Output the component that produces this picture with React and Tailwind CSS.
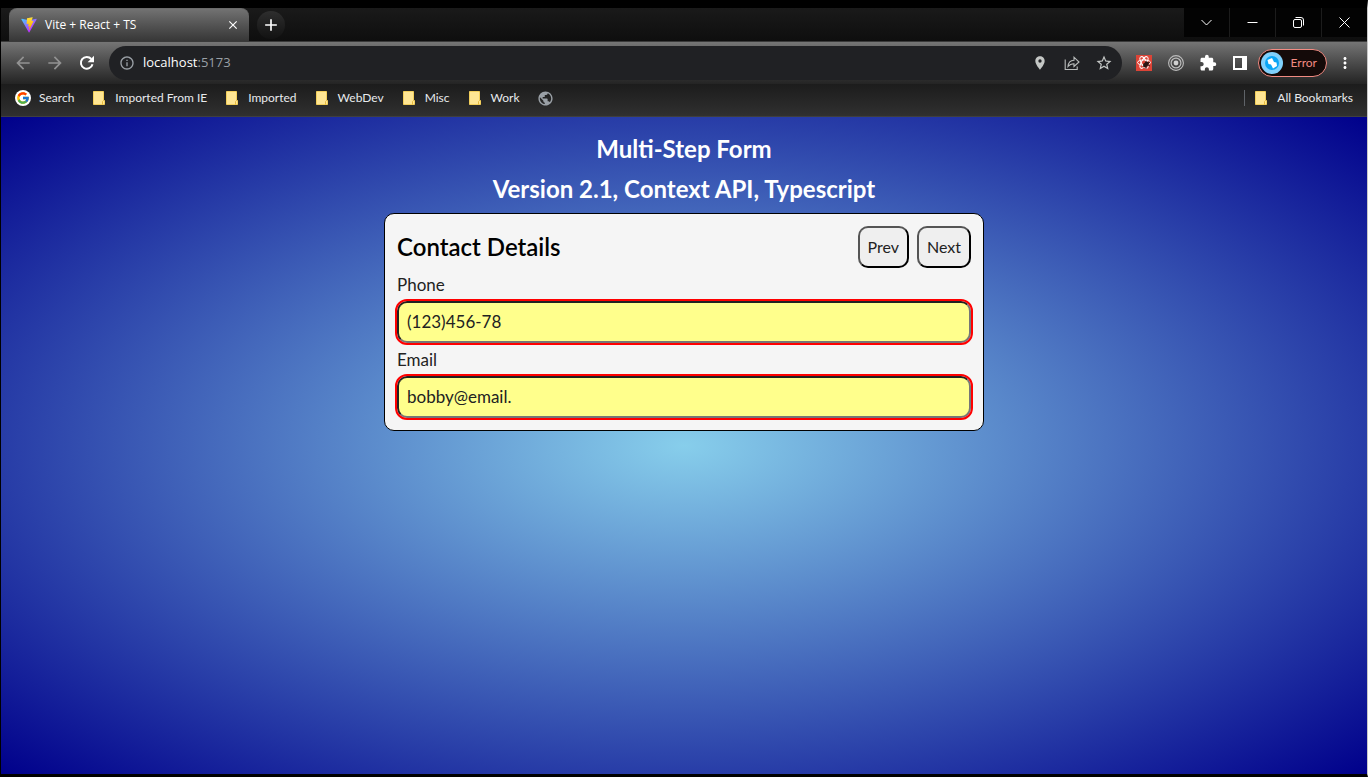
import React, { useState } from "react";
import { MdArrowBack, MdArrowForward, MdInfoOutline, MdLocationOn, MdStarBorder, MdExtension, MdMoreVert, MdClose, MdAdd, MdPublic } from "react-icons/md";
import { FcGoogle } from "react-icons/fc";

const folders = ["Imported From IE", "Imported", "WebDev", "Misc", "Work"];

function ViteLogo() {
  return (
    <svg viewBox="0 0 410 404" className="size-4" aria-hidden="true">
      <defs>
        <linearGradient id="vite-a" x1="6" y1="33" x2="235" y2="344" gradientUnits="userSpaceOnUse">
          <stop stopColor="#41D1FF" />
          <stop offset="1" stopColor="#BD34FE" />
        </linearGradient>
        <linearGradient id="vite-b" x1="194.651" y1="8.818" x2="236.076" y2="292.989" gradientUnits="userSpaceOnUse">
          <stop stopColor="#FFEA83" />
          <stop offset="0.083" stopColor="#FFDD35" />
          <stop offset="1" stopColor="#FFA800" />
        </linearGradient>
      </defs>
      <path d="M399.641 59.525L215.643 388.545C211.844 395.338 202.084 395.378 198.228 388.618L10.582 59.556C6.381 52.19 12.68 43.267 21.028 44.759L205.223 77.682C206.398 77.892 207.601 77.89 208.776 77.676L389.119 44.806C397.439 43.289 403.768 52.143 399.641 59.525Z" fill="url(#vite-a)" />
      <path d="M292.965 1.574L156.801 28.255C154.563 28.694 152.906 30.59 152.771 32.866L144.395 174.33C144.198 177.662 147.258 180.248 150.51 179.498L188.42 170.749C191.967 169.931 195.172 173.055 194.443 176.622L183.18 231.775C182.422 235.487 185.907 238.661 189.532 237.56L212.947 230.446C216.577 229.344 220.065 232.527 219.297 236.242L201.398 322.875C200.278 328.294 207.486 331.249 210.492 326.603L212.5 323.5L323.454 102.072C325.312 98.365 322.108 94.137 318.036 94.923L279.014 102.454C275.347 103.161 272.227 99.746 273.262 96.158L298.731 7.867C299.767 4.273 296.636 .855 292.965 1.574Z" fill="url(#vite-b)" />
    </svg>
  );
}

function ReloadIcon() {
  return (
    <svg viewBox="0 0 16 16" className="size-4" aria-hidden="true">
      <path d="M13.500 9.300A5.900 5.900 0 1 1 12.300 4" fill="none" stroke="#fff" strokeWidth="2" />
      <path d="M15 .8v6.400H8.600z" fill="#fff" />
    </svg>
  );
}

function FolderIcon() {
  return (
    <svg viewBox="0 0 16 16" className="size-4 shrink-0" aria-hidden="true">
      <path d="M2.500 1.500h10v9h1v4h-11z" fill="#ffe694" stroke="#f3cf5b" />
      <path d="M11.500 14.500v-3l1-1" fill="none" stroke="#e6b93c" />
    </svg>
  );
}

function ShareIcon() {
  return (
    <svg viewBox="0 0 16 16" className="size-4" fill="none" stroke="#b9bcbb" strokeWidth="1.100" aria-hidden="true">
      <path d="M1.200 4.500v10h12v-3" />
      <path d="M4 11.500c.3-4 2.300-6 6-6.200V2.200l5 4.800-5 4.500V8.700c-2.700 0-4.500.8-6 2.800z" />
    </svg>
  );
}

function ReactToolsIcon() {
  return (
    <svg viewBox="0 0 16 16" className="size-4" aria-hidden="true">
      <rect width="16" height="16" fill="#dc4437" />
      <g fill="none" stroke="#fff" strokeWidth="1">
        <ellipse cx="8" cy="7.500" rx="6.500" ry="2.600" />
        <ellipse cx="8" cy="7.500" rx="6.500" ry="2.600" transform="rotate(60 8 7.500)" />
        <ellipse cx="8" cy="7.500" rx="6.500" ry="2.600" transform="rotate(120 8 7.500)" />
      </g>
      <ellipse cx="10" cy="9.500" rx="2.200" ry="3.200" transform="rotate(45 10 9.500)" fill="#2a1512" />
      <path d="m7 9 1.500.5M7 12l2-1m1-5v2m4-1-2 1m2 3-2-1m-2 4v-2" stroke="#2a1512" strokeWidth=".9" />
    </svg>
  );
}

function TargetIcon() {
  return (
    <svg viewBox="0 0 16 16" className="size-4" fill="none" stroke="#bdbdbd" aria-hidden="true">
      <circle cx="8" cy="8" r="7.400" strokeWidth="1.100" />
      <circle cx="8" cy="8" r="4.900" strokeWidth="1.200" />
      <circle cx="8" cy="8" r="2.400" fill="#d0d0d0" stroke="none" />
    </svg>
  );
}

function SidePanelIcon() {
  return (
    <svg viewBox="0 0 16 16" className="size-4" aria-hidden="true">
      <path fillRule="evenodd" d="M1 1h14v14H1zM3 3v10h7V3z" fill="#fff" />
    </svg>
  );
}

function Avatar() {
  return (
    <svg viewBox="0 0 22 22" className="size-[22px]" aria-hidden="true">
      <circle cx="11" cy="11" r="11" fill="#80d0fb" />
      <circle cx="11" cy="11" r="7" fill="#0aa5f5" />
      <path d="m6.500 8 4.500-2 2 4 2.500.5L16 14l-4 2.500-2-4-2.500-.5z" fill="#fff" />
    </svg>
  );
}

function WindowButton({ label, children }) {
  return (
    <button type="button" aria-label={label} className="flex h-[29px] w-[45px] items-center justify-center bg-[#030303]">
      <svg viewBox="0 0 11 11" className="size-[11px]" fill="none" stroke="#fff" strokeWidth="1" aria-hidden="true">
        {children}
      </svg>
    </button>
  );
}

function IconButton({ label, children }) {
  return (
    <button type="button" aria-label={label} className="flex h-8 w-8 items-center justify-center">
      {children}
    </button>
  );
}

function TabStrip() {
  return (
    <div className="flex h-[33px] items-start justify-between bg-linear-to-b from-[#1a1a1a] to-[#0e0e0e]">
      <div className="flex items-start gap-2 pl-2">
        <div className="flex h-[33px] w-60 items-center rounded-t-lg border-t border-[#6a6a6a] bg-linear-to-b from-[#727272] to-[#373737] pr-2 pl-3">
          <ViteLogo />
          <span className="ml-2 grow font-['Open_Sans',sans-serif] text-xs text-white">Vite + React + TS</span>
          <button type="button" aria-label="Close tab" className="flex size-4 items-center justify-center text-white">
            <MdClose className="size-3.5" />
          </button>
        </div>
        <button type="button" aria-label="New tab" className="mt-[3px] flex size-7 items-center justify-center rounded-full bg-linear-to-b from-[#2e2e2e] to-[#121212] text-white">
          <MdAdd className="size-5" />
        </button>
      </div>
      <div className="flex gap-px bg-[#1c1c1c]">
        <WindowButton label="Search tabs"><path d="m.5 3 5 5 5-5" /></WindowButton>
        <WindowButton label="Minimize"><path d="M.5 5.500h10" /></WindowButton>
        <WindowButton label="Restore">
          <rect x=".5" y="2.500" width="8" height="8" rx="1.500" />
          <path d="M2.500.5H8a2.500 2.500 0 0 1 2.500 2.500v5.500" />
        </WindowButton>
        <WindowButton label="Close"><path d="m.5.5 10 10M10.500.5l-10 10" /></WindowButton>
      </div>
    </div>
  );
}

function Toolbar() {
  return (
    <div className="flex h-[43px] items-center border-t border-[#3a3a3a] bg-linear-to-b from-[#757575] to-[#242424] pr-3 pl-1.5">
      <IconButton label="Back"><MdArrowBack className="size-5 text-[#929292]" /></IconButton>
      <IconButton label="Forward"><MdArrowForward className="size-5 text-[#929292]" /></IconButton>
      <IconButton label="Reload"><ReloadIcon /></IconButton>
      <div className="ml-1.5 flex h-[34px] grow items-center rounded-full bg-[#202124] pr-0.5 pl-2.5">
        <MdInfoOutline className="size-4 text-[#9aa0a6]" />
        <span className="ml-2 grow font-['Open_Sans',sans-serif] text-[13px] text-white">
          localhost<span className="text-[#9aa0a6]">:5173</span>
        </span>
        <IconButton label="Location"><MdLocationOn className="size-4 text-[#c4c7c5]" /></IconButton>
        <IconButton label="Share"><ShareIcon /></IconButton>
        <IconButton label="Bookmark this page"><MdStarBorder className="size-[18px] text-[#c4c7c5]" /></IconButton>
      </div>
      <div className="ml-1.5 flex items-center">
        <IconButton label="React extension"><ReactToolsIcon /></IconButton>
        <IconButton label="Recorder extension"><TargetIcon /></IconButton>
        <IconButton label="Extensions"><MdExtension className="size-[18px] text-white" /></IconButton>
        <IconButton label="Side panel"><SidePanelIcon /></IconButton>
      </div>
      <button type="button" className="ml-0.5 flex h-7 items-center gap-2 rounded-full border border-[#f28b82] bg-[#140a09] pr-[9px] pl-0.5 font-[Lato,sans-serif] text-xs text-[#f28b82]">
        <Avatar />
        Error
      </button>
      <button type="button" aria-label="Menu" className="ml-2 flex h-8 w-5 items-center justify-center text-white">
        <MdMoreVert className="size-[18px] shrink-0" />
      </button>
    </div>
  );
}

function BookmarksBar() {
  return (
    <nav className="flex h-[33px] items-start justify-between border-b border-[#3f3f3f] bg-linear-to-b from-[#1c1c1c] to-[#303030] px-3.5 pt-1.5 font-[Lato,sans-serif] text-xs leading-4 text-[#e8eaed]">
      <div className="flex gap-[17px]">
        <a href="#search" className="flex gap-2">
          <span className="flex size-4 items-center justify-center rounded-full bg-white"><FcGoogle className="size-3.5" /></span>
          Search
        </a>
        {folders.map((name) => (
          <a key={name} href="#folder" className="flex gap-2"><FolderIcon />{name}</a>
        ))}
        <a href="#site" aria-label="Site"><MdPublic className="size-[17px] text-[#9aa0a6]" /></a>
      </div>
      <a href="#all" className="flex gap-2 border-l border-[#5f6368] pl-2"><FolderIcon />All Bookmarks</a>
    </nav>
  );
}

function Field({ id, label, type, value, onChange }) {
  return (
    <div>
      <label htmlFor={id} className="block py-1 leading-[25px]">{label}</label>
      <input
        id={id}
        type={type}
        value={value}
        onChange={(e) => onChange(e.target.value)}
        className="block h-[42px] w-full rounded-[10px] border-2 border-t-[#222] border-r-[#767676] border-b-[#767676] border-l-[#222] bg-[#ffff8c] px-2 pb-0.5 outline-2 outline-[#f00]"
      />
    </div>
  );
}

function FormButton({ children }) {
  return (
    <button type="button" className="h-[42px] rounded-[10px] border-2 border-t-[#555] border-r-black border-b-black border-l-[#555] bg-[#efefef] px-2 text-base">
      {children}
    </button>
  );
}

function ContactForm() {
  const [phone, setPhone] = useState("(123)456-78");
  const [email, setEmail] = useState("bobby@email.");
  return (
    <form className="w-full max-w-[600px] rounded-[10px] border border-black bg-[#f5f5f5] p-3 text-[17px] text-[#222]">
      <div className="flex items-center justify-between">
        <h2 className="text-2xl font-semibold text-black">Contact Details</h2>
        <div className="flex gap-2">
          <FormButton>Prev</FormButton>
          <FormButton>Next</FormButton>
        </div>
      </div>
      <Field id="phone" label="Phone" type="tel" value={phone} onChange={setPhone} />
      <Field id="email" label="Email" type="text" value={email} onChange={setEmail} />
    </form>
  );
}

export default function App() {
  return (
    <div className="flex min-h-screen flex-col border-t-8 border-r border-b-[3px] border-l border-black border-r-[#c8c8c8] bg-black">
      <TabStrip />
      <Toolbar />
      <BookmarksBar />
      <main className="flex grow flex-col items-center gap-2 bg-[radial-gradient(skyblue,darkblue)] pt-4 font-[Lato,sans-serif]">
        <h1 className="text-2xl font-bold text-white">Multi-Step Form</h1>
        <h1 className="text-2xl font-bold text-white">Version 2.1, Context API, Typescript</h1>
        <ContactForm />
      </main>
    </div>
  );
}
